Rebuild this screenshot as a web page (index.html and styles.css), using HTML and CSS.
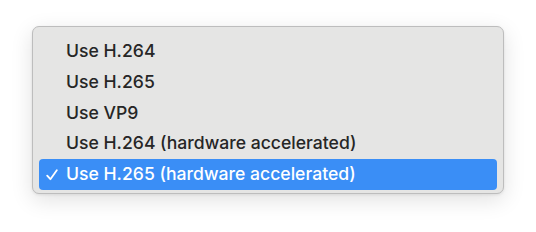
FILE: index.html
```html
<!DOCTYPE html>
<html lang="en">
<head>
    <meta charset="UTF-8">
    <title>Codec menu</title>
    <link rel="stylesheet" href="styles.css">
</head>
<body>
    <div class="menu">
        <div class="option">Use H.264</div>
        <div class="option">Use H.265</div>
        <div class="option">Use VP9</div>
        <div class="option">Use H.264 (hardware accelerated)</div>
        <div class="option selected">
            <svg class="check" width="12" height="12" viewBox="0 0 12 12">
                <path d="M1.2 6.6 L4.4 10.2 L10.8 1.2" fill="none" stroke="#ffffff" stroke-width="1.8" stroke-linecap="round" stroke-linejoin="round"/>
            </svg>
            Use H.265 (hardware accelerated)
        </div>
    </div>
</body>
</html>
```

FILE: styles.css
```css
body {
    margin: 0;
    width: 536px;
    height: 232px;
    background: #ffffff;
    font-family: 'Inter', 'Helvetica', sans-serif;
}

.menu {
    position: relative;
    top: 26px;
    left: 32px;
    width: 472px;
    padding: 9px 6px 3px 6px;
    box-sizing: border-box;
    background: #e5e5e4;
    border: 1px solid #bdbdbd;
    border-radius: 7px;
    box-shadow: 0 6px 22px rgba(0, 0, 0, 0.12), 0 1px 3px rgba(0, 0, 0, 0.08);
}

.option {
    position: relative;
    height: 30.8px;
    line-height: 30.8px;
    padding-left: 27px;
    font-size: 17.6px;
    font-weight: 500;
    color: #262626;
    border-radius: 4px;
}

.selected {
    background: #3a8ef6;
    color: #ffffff;
}

.check {
    position: absolute;
    left: 7px;
    top: 10px;
}
```
